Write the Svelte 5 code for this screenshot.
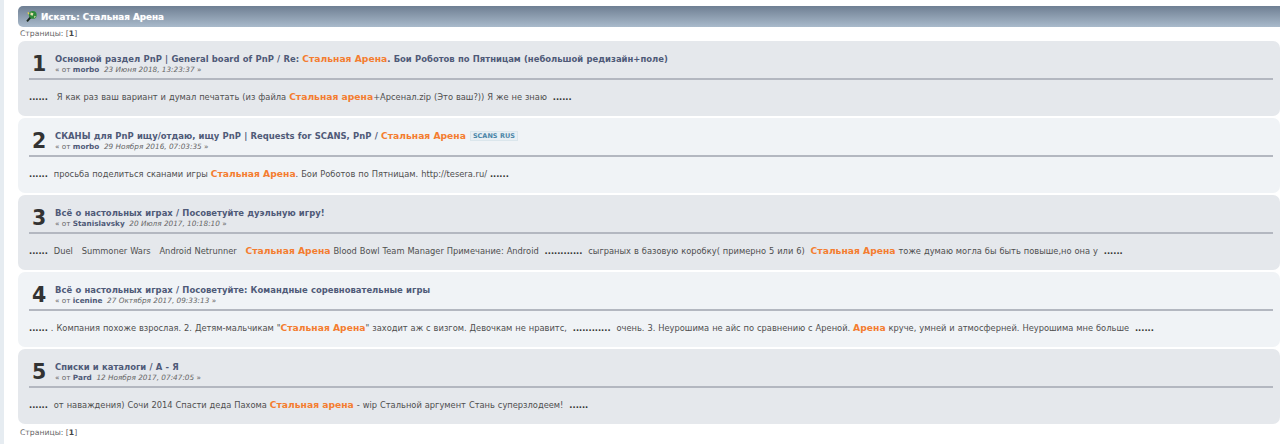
<script>
  const hl = (t) => ({ t, h: true });
  const dots = (t) => ({ t, d: true });
  const d = '......';
  const posts = [
    { n: 1, alt: false, title: ['Основной раздел PnP | General board of PnP', ' / ', 'Re: ', hl('Стальная Арена'), '. Бои Роботов по Пятницам (небольшой редизайн+поле)'], by: 'morbo', date: '23 Июня 2018, 13:23:37',
      body: [dots(d), '\u00a0\u00a0 Я как раз ваш вариант и думал печатать (из файла ', hl('Стальная арена'), '+Арсенал.zip (Это ваш?)) Я же не знаю \u00a0', dots(d)] },
    { n: 2, alt: true, title: ['СКАНЫ для PnP ищу/отдаю, ищу PnP | Requests for SCANS, PnP', ' / ', hl('Стальная Арена')], tag: 'SCANS RUS', by: 'morbo', date: '29 Ноября 2016, 07:03:35',
      body: [dots(d), '\u00a0 просьба поделиться сканами игры ', hl('Стальная Арена'), '. Бои Роботов по Пятницам. http://tesera.ru/ ', dots(d)] },
    { n: 3, alt: false, title: ['Всё о настольных играх', ' / ', 'Посоветуйте дуэльную игру!'], by: 'Stanislavsky', date: '20 Июля 2017, 10:18:10',
      body: [dots(d), '\u00a0 Duel \u00a0 Summoner Wars \u00a0 Android Netrunner \u00a0 ', hl('Стальная Арена'), ' Blood Bowl Team Manager Примечание: Android \u00a0', dots('............'), '\u00a0 сыграных в базовую коробку( примерно 5 или 6) \u00a0', hl('Стальная Арена'), ' тоже думаю могла бы быть повыше,но она у \u00a0', dots(d)] },
    { n: 4, alt: true, title: ['Всё о настольных играх', ' / ', 'Посоветуйте: Командные соревновательные игры'], by: 'icenine', date: '27 Октября 2017, 09:33:13',
      body: [dots(d), ' . Компания похоже взрослая. 2. Детям-мальчикам "', hl('Стальная Арена'), '" заходит аж с визгом. Девочкам не нравитс, \u00a0', dots('............'), '\u00a0 очень. 3. Неурошима не айс по сравнению с Ареной. ', hl('Арена'), ' круче, умней и атмосферней. Неурошима мне больше \u00a0', dots(d)] },
    { n: 5, alt: false, title: ['Списки и каталоги', ' / ', 'А - Я'], by: 'Pard', date: '12 Ноября 2017, 07:47:05',
      body: [dots(d), '\u00a0 от наваждения) Сочи 2014 Спасти деда Пахома ', hl('Стальная арена'), ' - wip Стальной аргумент Стань суперзлодеем! \u00a0', dots(d)] }
  ];
</script>

{#snippet rich(parts)}
  {#each parts as p}{#if typeof p === 'string'}{p}{:else if p.h}<span class="hl">{p.t}</span>{:else}<b class="dots">{p.t}</b>{/if}{/each}
{/snippet}

<div class="page">
  <h3 class="cat">
    <svg class="ico" viewBox="0 0 16 16">
      <circle cx="9.5" cy="6" r="4.8" fill="#2f8a3a" />
      <path d="M7 3l3.4 1-1 3.2-2.8-1.2zM11.5 7l2 1-2.2 2.2z" fill="#e8e2b0" />
      <path d="M6.5 9.5L2.5 14" stroke="#1d2b22" stroke-width="2.4" />
      <path d="M3.6 3l1.2 2" stroke="#e9d24a" stroke-width="1.6" />
    </svg>
    <span>Искать: Стальная Арена</span>
  </h3>
  <div class="pages">Страницы: [<b>1</b>]</div>
  {#each posts as p}
    <article class="post" class:alt={p.alt}>
      <header class="head">
        <div class="num">{p.n}</div>
        <div class="meta">
          <h5 class="title">{@render rich(p.title)}{#if p.tag} <span class="tag">{p.tag}</span>{/if}</h5>
          <div class="by">« от <b>{p.by}</b>&nbsp; <i>{p.date}</i> »</div>
        </div>
      </header>
      <div class="body">{@render rich(p.body)}</div>
    </article>
  {/each}
  <div class="pages bottom">Страницы: [<b>1</b>]</div>
</div>

<style>
  :global(body) { margin: 0; background: #fff; }
  .page { box-sizing: border-box; height: 444px; overflow: hidden; padding: 6px 0 0 14px; background: #fff; border-left: 4px solid #e6ecf1; font-family: Verdana, "DejaVu Sans", sans-serif; color: #4f4f4f; }
  .cat { margin: 0; height: 21px; display: flex; align-items: center; gap: 3px; padding-left: 7px; background: linear-gradient(#6f7f93, #a9bacb); border-radius: 5px 0 0 5px; color: #fff; font-size: 8.8px; font-weight: bold; text-shadow: 0 0 1px rgba(255, 255, 255, 0.5); }
  .ico { flex: none; width: 13px; height: 13px; }
  .pages { height: 14px; line-height: 14px; padding-left: 2px; font-size: 7.7px; color: #666; }
  .pages b { color: #444; }
  .post { box-sizing: border-box; height: 75px; margin-bottom: 2px; padding: 0 7px 0 11px; background: #e5e8ec; border-radius: 7px; }
  .post.alt { background: #f0f3f6; }
  .head { box-sizing: border-box; height: 39px; display: flex; align-items: flex-end; padding: 0 0 4px 3px; border-bottom: 2px solid #b3b7c0; }
  .num { width: 23px; margin-bottom: -2px; font: bold 20.5px/24px Verdana, "DejaVu Sans", sans-serif; color: #333; }
  .title { margin: 0; font-size: 8.45px; font-weight: bold; word-spacing: 0.3px; color: #4f5a78; line-height: 12px; white-space: nowrap; }
  .hl { color: #f47d30; font-size: 9.2px; font-weight: bold; word-spacing: 0; }
  .tag { display: inline-block; margin-left: 4px; padding: 0 2px; border: 1px solid #dbe6ec; background: #e8eff4; color: #4b86a8; font-size: 6.5px; line-height: 8px; vertical-align: 1px; }
  .by { font-size: 7.3px; line-height: 9px; color: #666; }
  .by b { color: #4f5a78; }
  .body { padding-top: 11px; font-size: 8.3px; word-spacing: 0.3px; line-height: 12px; white-space: nowrap; }
  .dots { color: #333; }
  .bottom { margin-top: 2px; }
</style>
